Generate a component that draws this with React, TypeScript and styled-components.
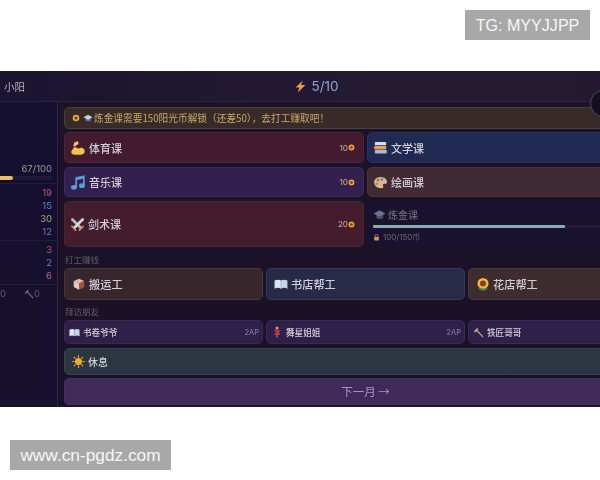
import React from "react";
import styled, { createGlobalStyle } from "styled-components";

const GlobalStyle = createGlobalStyle`
  html, body {
    margin: 0;
    background: #fff;
    font-family: "Noto Sans CJK SC", "Noto Sans", sans-serif;
  }
`;

const Page = styled.div`
  width: 600px;
  height: 480px;
  overflow: hidden;
  display: flex;
  flex-direction: column;
`;

const TopBand = styled.div`
  height: 71px;
  display: flex;
  justify-content: flex-end;
  align-items: flex-start;
  padding: 10px 10px 0 0;
  box-sizing: border-box;
`;

const Watermark = styled.div<{ $w: number; $size: number }>`
  width: ${(p) => p.$w}px;
  height: 30px;
  background: #a8a8a8;
  color: #f6f6f6;
  font-family: "Liberation Sans", Arial, sans-serif;
  font-size: ${(p) => p.$size}px;
  display: flex;
  align-items: center;
  justify-content: center;
`;

const BottomBand = styled.div`
  padding: 33px 0 0 10px;
`;

const Frame = styled.div`
  position: relative;
  height: 336px;
  flex-shrink: 0;
  overflow: hidden;
  background: linear-gradient(180deg, #1d1329, #1a1127);
  display: flex;
  flex-direction: column;
  filter: blur(0.5px);
`;

const Header = styled.header`
  width: 632px;
  height: 31px;
  flex-shrink: 0;
  box-sizing: border-box;
  display: grid;
  grid-template-columns: 1fr auto 1fr;
  align-items: center;
  padding: 0 3px 0 4px;
  background: linear-gradient(90deg, #1a1430, #261a33 60%, #241a30);
  border-bottom: 1px solid #33223f;
`;

const PlayerName = styled.span`
  font-size: 10.5px;
  color: #b3b0be;
`;

const Energy = styled.span`
  display: flex;
  align-items: center;
  gap: 4px;
  font-size: 13.5px;
  color: #8fa2d2;
  font-family: "Inter", sans-serif;
`;

const Body = styled.div`
  flex: 1;
  display: flex;
  min-height: 0;
`;

const Sidebar = styled.aside`
  width: 58px;
  flex-shrink: 0;
  box-sizing: border-box;
  border-right: 1px solid #302444;
  background: linear-gradient(180deg, #150f30, #17102e);
  padding: 60px 5px 0 0;
  display: flex;
  flex-direction: column;
  align-items: flex-end;
`;

const ExpText = styled.div`
  font-size: 9.5px;
  line-height: 14px;
  color: #a39a92;
  font-family: "Inter", sans-serif;
`;

const ExpTrack = styled.div`
  width: 118px;
  height: 4px;
  margin: 0 0 3px;
  flex-shrink: 0;
  display: flex;
  background: #1f1838;
  border-radius: 2px;
`;

const ExpFill = styled.div`
  background: #e6c068;
  border-radius: 2px;
`;

const StatGroup = styled.div`
  align-self: stretch;
  margin-right: -5px;
  padding: 2px 5px 2px 0;
  border-top: 1px solid #241c3c;
  display: flex;
  flex-direction: column;
  align-items: flex-end;
`;

const Stat = styled.div<{ $color: string }>`
  height: 13px;
  line-height: 13px;
  font-size: 9.5px;
  font-family: "Inter", sans-serif;
  color: ${(p) => p.$color};
`;

const ToolRow = styled.div`
  align-self: stretch;
  margin-right: -5px;
  border-top: 1px solid #241c3c;
  padding: 3px 17px 0 0;
  display: flex;
  justify-content: space-between;
  align-items: center;
  font-size: 9.5px;
  font-family: "Inter", sans-serif;
  color: #5d5870;
`;

const ToolCount = styled.span`
  display: flex;
  align-items: center;
`;

const Main = styled.main`
  width: 603px;
  flex-shrink: 0;
  margin-left: 6px;
  padding-top: 5px;
  display: flex;
  flex-direction: column;
`;

const Notice = styled.div`
  height: 22px;
  box-sizing: border-box;
  margin-bottom: 3px;
  padding-left: 7px;
  display: flex;
  align-items: center;
  gap: 3px;
  border-radius: 5px;
  background: #382a28;
  border: 1px solid #4d4038;
  color: #c9aa68;
  font-size: 9.7px;
  white-space: nowrap;
`;

const NoticeText = styled.span`
  margin-left: -2px;
`;

const CourseGrid = styled.div`
  display: grid;
  grid-template-columns: 300px 300px;
  grid-template-rows: 31px 30px 46px;
  gap: 4px 3px;
`;

const Card = styled.div<{ $bg: string; $line: string }>`
  box-sizing: border-box;
  display: flex;
  align-items: center;
  border-radius: 5px;
  background: ${(p) => p.$bg};
  border: 1px solid ${(p) => p.$line};
  color: #d2ced6;
  min-width: 0;
`;

const CourseCard = styled(Card)`
  gap: 3px;
  padding: 0 8px 0 5px;
  font-size: 11px;
  font-weight: 500;
`;

const Cost = styled.span`
  margin-left: auto;
  display: flex;
  align-items: center;
  font-size: 8px;
  font-family: "Inter", sans-serif;
  color: #c2a27e;
`;

const LockedCard = styled.div`
  box-sizing: border-box;
  border-radius: 5px;
  background: #1a1330;
  padding: 5px 6px 0 6px;
  display: flex;
  flex-direction: column;
`;

const LockedTitle = styled.div`
  display: flex;
  align-items: center;
  gap: 2px;
  height: 16px;
  font-size: 10px;
  color: #77727f;
`;

const LockTrack = styled.div`
  height: 2.5px;
  margin-top: 3px;
  background: #241c38;
  display: flex;
`;

const LockFill = styled.div`
  background: #8fa9b4;
  border-radius: 1px;
`;

const LockNote = styled.div`
  display: flex;
  align-items: center;
  gap: 3px;
  margin-top: 4px;
  font-size: 8px;
  font-family: "Inter", sans-serif;
  color: #6a6577;
`;

const SectionLabel = styled.div<{ $h: number }>`
  height: ${(p) => p.$h}px;
  display: flex;
  align-items: flex-end;
  padding: 0 0 3px 1px;
  box-sizing: border-box;
  font-size: 8.5px;
  color: #625d6a;
`;

const ThreeRow = styled.div<{ $h: number }>`
  display: grid;
  grid-template-columns: repeat(3, 199px);
  gap: 3px;
  height: ${(p) => p.$h}px;
`;

const JobCard = styled(Card)`
  gap: 3px;
  padding: 0 7px;
  font-size: 11.2px;
  font-weight: 500;
`;

const FriendCard = styled(Card)`
  gap: 3px;
  padding: 0 3px 0 4px;
  font-size: 8.6px;
  font-weight: 500;
`;

const ApCost = styled.span`
  margin-left: auto;
  font-size: 7.5px;
  font-family: "Inter", sans-serif;
  font-weight: 400;
  color: #8d83a8;
`;

const RestButton = styled(Card)`
  height: 27px;
  margin: 4px 0 3px;
  padding-left: 7px;
  gap: 3px;
  font-size: 10px;
  font-weight: 500;
`;

const NextButton = styled(Card)`
  height: 27px;
  padding-bottom: 2px;
  justify-content: center;
  font-size: 11.5px;
  color: #a898c8;
`;

const RoundButton = styled.div`
  position: absolute;
  left: 590px;
  top: 19px;
  width: 27px;
  height: 27px;
  box-sizing: border-box;
  border-radius: 50%;
  background: #130e20;
  border: 1px solid #4e4a58;
`;

type IconProps = { size?: number };

const Svg = ({ size = 12, children }: IconProps & { children: React.ReactNode }) => (
  <svg width={size} height={size} viewBox="0 0 24 24" style={{ flexShrink: 0 }}>
    {children}
  </svg>
);

const Sunflower = ({ size }: IconProps) => (
  <Svg size={size}>
    <circle cx="12" cy="11" r="9.5" fill="#f2b632" />
    <circle cx="12" cy="11" r="5" fill="#7a3f12" />
    <path d="M4 20c3-2 5-1 8 1 3-2 5-3 8-1-2 4-14 4-16 0z" fill="#4f8a32" />
  </Svg>
);

const Coin = ({ size = 7 }: IconProps) => (
  <Svg size={size}>
    <circle cx="12" cy="12" r="10" fill="#eaa52c" />
    <circle cx="12" cy="12" r="4.5" fill="#6a3a18" />
  </Svg>
);

const Cap = ({ size, dim }: IconProps & { dim?: boolean }) => (
  <Svg size={size}>
    <path d="M6 12v6c3 3 10 3 13 0v-6z" fill={dim ? "#4a4c5c" : "#5a6f98"} />
    <path d="M1 10 12 4l11 6-11 6z" fill={dim ? "#6d7488" : "#bcd0e6"} />
  </Svg>
);

const Muscle = ({ size }: IconProps) => (
  <Svg size={size}>
    <path
      d="M12 2 7 3 5 8l1 2 3-1 1-2 2 0 1-2zM6 11 2 17c-1 4 3 6 7 5 5 0 12 1 13-4 1-5-5-8-9-5-2-1-4-2-7-2z"
      fill="#f2c14e"
    />
  </Svg>
);

const Music = ({ size }: IconProps) => (
  <Svg size={size}>
    <path d="M8 5 22 2v15h-2.500V7L10.500 9v11H8z" fill="#5b9bd8" />
    <ellipse cx="6" cy="20" rx="4.500" ry="3.500" fill="#5b9bd8" />
    <ellipse cx="18" cy="17.500" rx="4.500" ry="3.500" fill="#5b9bd8" />
  </Svg>
);

const Swords = ({ size }: IconProps) => (
  <Svg size={size}>
    <path d="M2 2 5 2 19 16 16 19 2 5z" fill="#b8bcc8" />
    <path d="M22 2 19 2 5 16 8 19 22 5z" fill="#d4d6de" />
    <path d="M3 15l6 6M21 15l-6 6" stroke="#c49a6a" strokeWidth="2.500" strokeLinecap="round" />
  </Svg>
);

const Books = ({ size }: IconProps) => (
  <Svg size={size}>
    <rect x="3" y="3" width="18" height="5.500" rx="1" fill="#d9dde6" />
    <rect x="2" y="9.500" width="19" height="5.500" rx="1" fill="#e8a04a" />
    <rect x="3" y="16" width="19" height="5.500" rx="1" fill="#aab8d8" />
  </Svg>
);

const Palette = ({ size }: IconProps) => (
  <Svg size={size}>
    <path d="M12 3C5 3 1 8 2 13c1 6 7 8 12 8 3 0 3-2 2-4-1-2 1-3 3-3 3 0 4-2 3-5-1-4-5-6-10-6z" fill="#e0b48c" />
    <circle cx="8" cy="8" r="2" fill="#d8433a" />
    <circle cx="14" cy="7" r="2" fill="#3a7bd5" />
    <circle cx="6" cy="14" r="2" fill="#4caf50" />
    <circle cx="10" cy="18" r="1.800" fill="#e8c040" />
  </Svg>
);

const Box = ({ size }: IconProps) => (
  <Svg size={size}>
    <path d="M12 3 21 7 12 11 3 7z" fill="#e6b8a2" />
    <path d="M3 7l9 4v11l-9-5z" fill="#e0ccc0" />
    <path d="M21 7l-9 4v11l9-5z" fill="#a5533f" />
  </Svg>
);

const OpenBook = ({ size }: IconProps) => (
  <Svg size={size}>
    <path d="M1 6c4-2 8-2 11 0v14c-3-2-7-2-11 0z" fill="#dbe6f4" />
    <path d="M23 6c-4-2-8-2-11 0v14c3-2 7-2 11 0z" fill="#c4d4ea" />
    <path d="M12 6v14" stroke="#8fa4c4" strokeWidth="1" />
  </Svg>
);

const Dancer = ({ size }: IconProps) => (
  <Svg size={size}>
    <circle cx="12" cy="4" r="3" fill="#e0a070" />
    <path d="M10 8h5l5 1-4 2 2 7H6l4-7-5-3z" fill="#c8323a" />
    <path d="M11 18v5h2v-5z" fill="#d88a70" />
  </Svg>
);

const Hammer = ({ size }: IconProps) => (
  <Svg size={size}>
    <path d="M9 8 21 21" stroke="#d8985a" strokeWidth="3" strokeLinecap="round" />
    <path d="M2 9 9 2l3 3-7 7z" fill="#a8acb4" />
  </Svg>
);

const MutedHammer = ({ size }: IconProps) => (
  <Svg size={size}>
    <path d="M9 8 21 21" stroke="#6a6478" strokeWidth="3" strokeLinecap="round" />
    <path d="M2 9 9 2l3 3-7 7z" fill="#6a6478" />
  </Svg>
);

const Sun = ({ size }: IconProps) => (
  <Svg size={size}>
    <circle cx="12" cy="12" r="6.500" fill="#f4a92e" />
    <path
      d="M12 1v3M12 20v3M1 12h3M20 12h3M4 4l2 2M18 18l2 2M20 4l-2 2M6 18l-2 2"
      stroke="#e8a32c"
      strokeWidth="2"
      strokeLinecap="round"
    />
  </Svg>
);

const Bolt = ({ size }: IconProps) => (
  <Svg size={size}>
    <path d="M16 1 3 14h7l-3 9L21 9h-8z" fill="#f0a030" />
  </Svg>
);

const Lock = ({ size = 7 }: IconProps) => (
  <Svg size={size}>
    <path d="M7 11V7a5 5 0 0 1 10 0v4" fill="none" stroke="#b8a080" strokeWidth="2.500" />
    <rect x="4" y="10" width="16" height="12" rx="2" fill="#d09a48" />
  </Svg>
);

const exp = 67;

export default function App() {
  return (
    <Page>
      <GlobalStyle />
      <TopBand>
        <Watermark $w={125} $size={16.100}>TG: MYYJJPP</Watermark>
      </TopBand>
      <Frame>
        <Header>
          <PlayerName>小阳</PlayerName>
          <Energy>
            <Bolt size={13} />
            5/10
          </Energy>
        </Header>
        <Body>
          <Sidebar>
            <ExpText>67/100</ExpText>
            <ExpTrack>
              <ExpFill style={{ width: `${exp}%` }} />
            </ExpTrack>
            <StatGroup>
              <Stat $color="#b85a70">19</Stat>
              <Stat $color="#5f86c4">15</Stat>
              <Stat $color="#b8a07c">30</Stat>
              <Stat $color="#7f6fc0">12</Stat>
            </StatGroup>
            <StatGroup>
              <Stat $color="#b85a70">3</Stat>
              <Stat $color="#5f86c4">2</Stat>
              <Stat $color="#b06a90">6</Stat>
            </StatGroup>
            <ToolRow>
              <span>0</span>
              <ToolCount>
                <MutedHammer size={10} />0
              </ToolCount>
            </ToolRow>
          </Sidebar>
          <Main>
            <Notice>
              <Coin size={8} />
              <Cap size={10} />
              <NoticeText>炼金课需要150阳光币解锁（还差50），去打工赚取吧！</NoticeText>
            </Notice>
            <CourseGrid>
              <CourseCard $bg="#431b30" $line="#4f2436">
                <Muscle size={16} />体育课
                <Cost>10<Coin /></Cost>
              </CourseCard>
              <CourseCard $bg="#212a52" $line="#2a335c">
                <Books size={15} />文学课
              </CourseCard>
              <CourseCard $bg="#33204f" $line="#3f2c5a">
                <Music size={16} />音乐课
                <Cost>10<Coin /></Cost>
              </CourseCard>
              <CourseCard $bg="#402a33" $line="#4a343c">
                <Palette size={15} />绘画课
              </CourseCard>
              <CourseCard $bg="#431c2e" $line="#4e2536">
                <Swords size={15} />剑术课
                <Cost>20<Coin /></Cost>
              </CourseCard>
              <LockedCard>
                <LockedTitle>
                  <Cap size={13} dim />炼金课
                </LockedTitle>
                <LockTrack>
                  <LockFill style={{ width: `${(100 / 150) * 100}%` }} />
                </LockTrack>
                <LockNote>
                  <Lock />
                  100/150币
                </LockNote>
              </LockedCard>
            </CourseGrid>
            <SectionLabel $h={21}>打工赚钱</SectionLabel>
            <ThreeRow $h={32}>
              <JobCard $bg="#37262c" $line="#463638">
                <Box size={14} />搬运工
              </JobCard>
              <JobCard $bg="#272b48" $line="#363a56">
                <OpenBook size={14} />书店帮工
              </JobCard>
              <JobCard $bg="#3d2c30" $line="#4a3a3c">
                <Sunflower size={14} />花店帮工
              </JobCard>
            </ThreeRow>
            <SectionLabel $h={20}>拜访朋友</SectionLabel>
            <ThreeRow $h={24}>
              <FriendCard $bg="#2e2048" $line="#382a52">
                <OpenBook size={11} />书卷爷爷
                <ApCost>2AP</ApCost>
              </FriendCard>
              <FriendCard $bg="#2e2048" $line="#382a52">
                <Dancer size={12} />舞星姐姐
                <ApCost>2AP</ApCost>
              </FriendCard>
              <FriendCard $bg="#2e2048" $line="#382a52">
                <Hammer size={11} />铁匠哥哥
              </FriendCard>
            </ThreeRow>
            <RestButton $bg="#2b3640" $line="#36424c">
              <Sun size={13} />休息
            </RestButton>
            <NextButton $bg="#3f2a58" $line="#452f5e">下一月 →</NextButton>
          </Main>
        </Body>
        <RoundButton />
      </Frame>
      <BottomBand>
        <Watermark $w={161} $size={17.300}>www.cn-pgdz.com</Watermark>
      </BottomBand>
    </Page>
  );
}
